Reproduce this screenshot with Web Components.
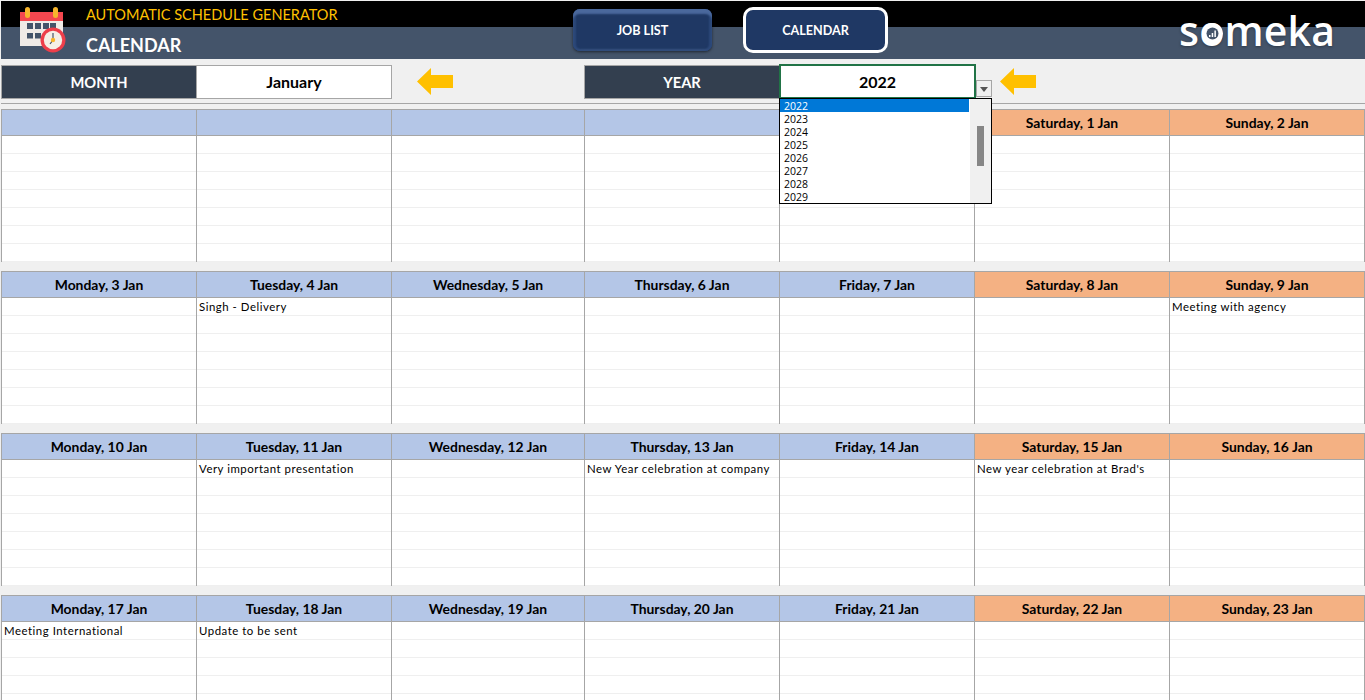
<!DOCTYPE html>
<html>
<head>
<meta charset="utf-8">
<title>Calendar</title>
<style>
  html, body { margin: 0; height: 700px; overflow: hidden; background: #f0f0f0; font-family: Lato, "Liberation Sans", sans-serif; }
</style>
</head>
<body>
<app-header></app-header>

<control-bar></control-bar>

<cal-week>
  <cal-day></cal-day><cal-day></cal-day><cal-day></cal-day><cal-day></cal-day><cal-day></cal-day>
  <cal-day label="Saturday, 1 Jan" weekend></cal-day>
  <cal-day label="Sunday, 2 Jan" weekend></cal-day>
</cal-week>
<cal-week>
  <cal-day label="Monday, 3 Jan"></cal-day>
  <cal-day label="Tuesday, 4 Jan">Singh - Delivery</cal-day>
  <cal-day label="Wednesday, 5 Jan"></cal-day>
  <cal-day label="Thursday, 6 Jan"></cal-day>
  <cal-day label="Friday, 7 Jan"></cal-day>
  <cal-day label="Saturday, 8 Jan" weekend></cal-day>
  <cal-day label="Sunday, 9 Jan" weekend>Meeting with agency</cal-day>
</cal-week>
<cal-week>
  <cal-day label="Monday, 10 Jan"></cal-day>
  <cal-day label="Tuesday, 11 Jan">Very important presentation</cal-day>
  <cal-day label="Wednesday, 12 Jan"></cal-day>
  <cal-day label="Thursday, 13 Jan">New Year celebration at company</cal-day>
  <cal-day label="Friday, 14 Jan"></cal-day>
  <cal-day label="Saturday, 15 Jan" weekend>New year celebration at Brad's</cal-day>
  <cal-day label="Sunday, 16 Jan" weekend></cal-day>
</cal-week>
<cal-week>
  <cal-day label="Monday, 17 Jan">Meeting International</cal-day>
  <cal-day label="Tuesday, 18 Jan">Update to be sent</cal-day>
  <cal-day label="Wednesday, 19 Jan"></cal-day>
  <cal-day label="Thursday, 20 Jan"></cal-day>
  <cal-day label="Friday, 21 Jan"></cal-day>
  <cal-day label="Saturday, 22 Jan" weekend></cal-day>
  <cal-day label="Sunday, 23 Jan" weekend></cal-day>
</cal-week>

<script>
// Cabecera: icono, titulos, botones y logo
class AppHeader extends HTMLElement {
  constructor() {
    super();
    this.attachShadow({ mode: 'open' });
  }

  connectedCallback() {
    this.shadowRoot.innerHTML = `
      <style>
        :host {
          display: flex;
          height: 58px;
          margin: 1px 0 0 1px;
          background: linear-gradient(#000 26px, #44546a 26px);
          font-family: Lato, "Liberation Sans", sans-serif;
          color: #fff;
        }
        svg.icon { width: 50px; height: 50px; margin: 4px 0 0 17px; flex: none; }
        .titles { width: 487px; margin-left: 18px; flex: none; }
        .app { color: #ffc000; font-size: 14.5px; line-height: 18px; margin-top: 5px; }
        .page { font-size: 18px; font-weight: 700; line-height: 24px; margin-top: 9px; }
        .btn {
          flex: none;
          box-sizing: border-box;
          display: flex;
          align-items: center;
          justify-content: center;
          font-size: 12.6px;
          font-weight: 700;
        }
        .bevel {
          width: 139px;
          height: 42px;
          margin-top: 8px;
          border-radius: 7px;
          background: #1f3864;
          box-shadow: inset 0 6px 2px -1px #4a689c, inset 4px 0 2px -1px #2c4879, inset -4px 0 2px -1px #2c4879, inset 0 -3px 2px -1px #35507e, 0 1px 3px rgba(0,0,0,.55);
        }
        .active {
          width: 145px;
          height: 46px;
          margin: 6px 0 0 31px;
          border: 3px solid #fff;
          border-radius: 10px;
          background: #1f3864;
        }
        .logo {
          position: relative;
          margin: 5px 0 0 291px;
          height: 48px;
          font: 600 41px/48px "Open Sans", sans-serif;
          letter-spacing: 0.2px;
          text-shadow: 0 1px 3px rgba(0,0,0,.35);
        }
        .logo svg { position: absolute; left: 23px; top: 17px; width: 21px; height: 21px; }
      </style>
      <svg class="icon" viewBox="0 0 50 50">
        <rect x="2" y="16" width="43" height="25" fill="#f0ebe7"/>
        <rect x="2" y="7" width="43" height="9" fill="#f4474f"/>
        <rect x="7" y="2" width="5" height="11" rx="2.5" fill="#f7b52c"/>
        <rect x="35" y="2" width="5" height="11" rx="2.5" fill="#f7b52c"/>
        <g fill="#44546a">
          <rect x="9" y="18" width="6" height="6"/><rect x="17" y="18" width="6" height="6"/>
          <rect x="25" y="18" width="6" height="6"/><rect x="32" y="18" width="6" height="6"/>
          <rect x="9" y="28" width="6" height="5.500"/><rect x="17" y="28" width="6" height="5.500"/>
        </g>
        <circle cx="35" cy="35" r="12.500" fill="#ee3e4a"/>
        <circle cx="35" cy="35" r="9.200" fill="#f5efe6"/>
        <path d="M35 28v7l-3 4" fill="none" stroke="#44546a" stroke-width="1.200"/>
        <circle cx="35" cy="35" r="2.200" fill="#f7b52c"/>
      </svg>
      <div class="titles">
        <div class="app">AUTOMATIC SCHEDULE GENERATOR</div>
        <div class="page">CALENDAR</div>
      </div>
      <div class="btn bevel">JOB LIST</div>
      <div class="btn active">CALENDAR</div>
      <div class="logo">someka
        <svg viewBox="0 0 21 21">
          <circle cx="10.500" cy="10.500" r="10.500" fill="#fff"/>
          <circle cx="10.500" cy="10.500" r="6" fill="#44546a"/>
          <path d="M7 14v-2h1.500v2zM9.700 14v-4h1.500v4zM12.400 14V7.500h1.500V14z" fill="#fff"/>
        </svg>
      </div>
    `;
  }
}

// Barra de seleccion de mes y año con la lista abierta
class ControlBar extends HTMLElement {
  constructor() {
    super();
    this.attachShadow({ mode: 'open' });
  }

  connectedCallback() {
    const flecha = `<svg class="arrow" viewBox="0 0 36 27"><path d="M0 13.500 14 0v7h22v13H14v7z" fill="#ffc000"/></svg>`;
    const anios = [2022, 2023, 2024, 2025, 2026, 2027, 2028, 2029]
      .map((a, i) => `<div class="opt${i === 0 ? ' sel' : ''}">${a}</div>`).join('');
    this.shadowRoot.innerHTML = `
      <style>
        :host {
          display: block;
          height: 44px;
          border-bottom: 1px solid #a6a6a6;
          margin-left: 1px;
          font-family: Lato, "Liberation Sans", sans-serif;
        }
        .bar { display: flex; align-items: flex-start; padding-top: 6px; }
        .label, .value {
          box-sizing: border-box;
          width: 195px;
          height: 34px;
          display: flex;
          align-items: center;
          justify-content: center;
          font-size: 16px;
          font-weight: 700;
          flex: none;
        }
        .label { background: #333f4f; color: #fff; border: 1px solid #a6a6a6; border-right: 0; font-size: 14.7px; }
        .value { width: 196px; background: #fff; color: #000; border: 1px solid #a6a6a6; padding-bottom: 2px; }
        .arrow { width: 36px; height: 27px; margin: 3px 0 0 25px; flex: none; }
        .year { position: relative; display: flex; margin-left: 131px; flex: none; }
        .year .value { width: 197px; height: 35px; margin-top: -1px; border: 2px solid #217346; font-size: 16px; padding-bottom: 0; }
        .drop {
          position: absolute;
          left: 392px;
          top: 15px;
          width: 16px;
          height: 17px;
          box-sizing: border-box;
          background: #f0f0f0;
          border: 1px solid #a6a6a6;
        }
        .drop::after {
          content: '';
          position: absolute;
          left: 3px;
          top: 6px;
          border: 4px solid transparent;
          border-top: 5px solid #555;
          border-bottom: 0;
        }
        .list {
          position: absolute;
          left: 195px;
          top: 33px;
          width: 213px;
          height: 106px;
          box-sizing: border-box;
          border: 1px solid #000;
          background: #fff;
          z-index: 2;
          font: 10.5px/14px "Open Sans", sans-serif;
          overflow: hidden;
        }
        .opt { height: 13px; width: 189px; padding-left: 4px; box-sizing: border-box; color: #000; }
        .opt.sel { background: #0078d7; color: #fff; }
        .track { position: absolute; right: 0; top: 0; bottom: 0; width: 21px; background: #f0f0f0; }
        .thumb { position: absolute; left: 7px; top: 27px; width: 7px; height: 40px; background: #868686; }
        .year-wrap { display: flex; flex: none; }
        .year-wrap .arrow { margin-left: 24px; }
      </style>
      <div class="bar">
        <div class="label">MONTH</div>
        <div class="value">January</div>
        ${flecha}
        <div class="year">
          <div class="label">YEAR</div>
          <div class="value">2022</div>
          <div class="drop"></div>
          <div class="list">${anios}<div class="track"><div class="thumb"></div></div></div>
          <div class="year-wrap">${flecha}</div>
        </div>
      </div>
    `;
  }
}

// Una semana: fila de siete dias
class CalWeek extends HTMLElement {
  constructor() {
    super();
    this.attachShadow({ mode: 'open' });
  }

  connectedCallback() {
    this.shadowRoot.innerHTML = `
      <style>
        :host {
          display: grid;
          grid-template-columns: 195px 195px 193px 195px 195px 195px 196px;
          margin: 5px 0 9px 1px;
          width: 1364px;
        }
        :host(:not(:first-of-type)) { margin-top: 0; }
      </style>
      <slot></slot>
    `;
  }
}

// Celda de un dia: encabezado y siete renglones
class CalDay extends HTMLElement {
  constructor() {
    super();
    this.attachShadow({ mode: 'open' });
  }

  connectedCallback() {
    const etiqueta = this.getAttribute('label') || '';
    this.shadowRoot.innerHTML = `
      <style>
        :host {
          display: block;
          box-sizing: border-box;
          height: 153px;
          border-left: 1px solid #a6a6a6;
          border-top: 1px solid #a6a6a6;
          border-bottom: 1px solid #a6a6a6;
          background: #fff;
          font-family: Lato, "Liberation Sans", sans-serif;
        }
        :host(:last-child) { border-right: 1px solid #a6a6a6; }
        .head {
          box-sizing: border-box;
          height: 26px;
          line-height: 26px;
          text-align: center;
          font-size: 13.9px;
          font-weight: 700;
          color: #000;
          background: #b4c6e7;
          border-bottom: 1px solid #a6a6a6;
        }
        :host([weekend]) .head { background: #f4b183; }
        .lines {
          height: 126px;
          margin-top: 0;
          padding-left: 2px;
          font-size: 11.4px;
          line-height: 17px;
          color: #000;
          letter-spacing: 0.53px;
          white-space: nowrap;
          background: repeating-linear-gradient(#fff 0 17px, #efefef 17px 18px);
        }
      </style>
      <div class="head">${etiqueta}</div>
      <div class="lines"><slot></slot></div>
    `;
  }
}

customElements.define('app-header', AppHeader);
customElements.define('control-bar', ControlBar);
customElements.define('cal-week', CalWeek);
customElements.define('cal-day', CalDay);
</script>
</body>
</html>
